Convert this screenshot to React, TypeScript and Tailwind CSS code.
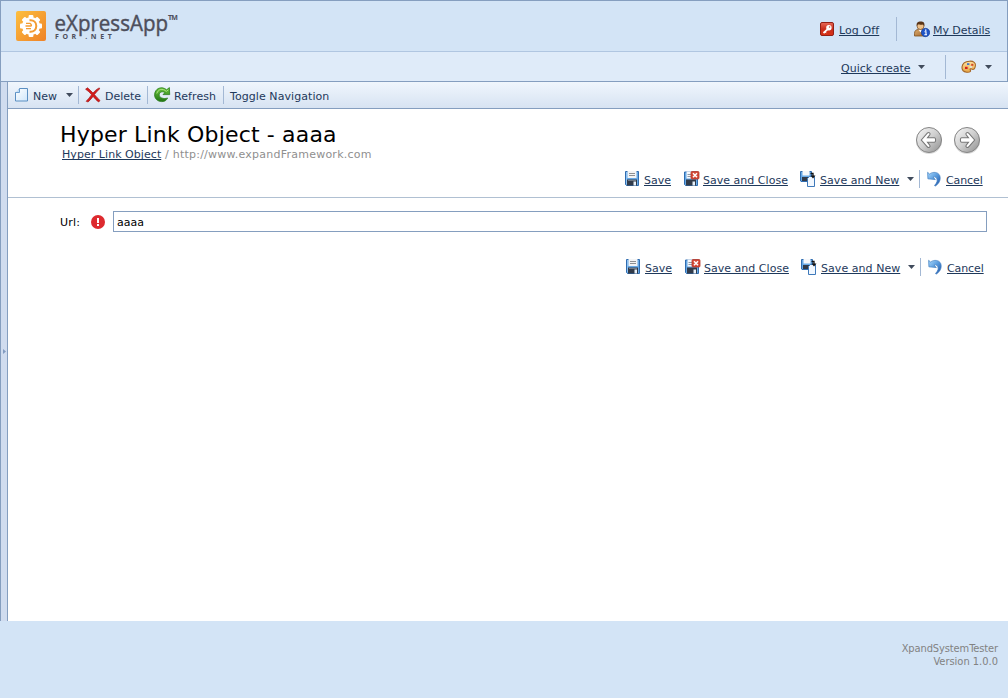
import React from 'react';

type IconProps = { className?: string };

const LogoIcon = () => (
  <svg width="30" height="30" viewBox="0 0 30 30" className="block shrink-0">
    <defs>
      <linearGradient id="logoBg" x1="0" y1="0" x2="1" y2="1">
        <stop offset="0" stopColor="#fdbf3f" />
        <stop offset="1" stopColor="#ee8228" />
      </linearGradient>
    </defs>
    <rect width="30" height="30" rx="2" fill="url(#logoBg)" />
    <g fill="#fff" transform="translate(15 15)">
      <circle r="9" />
      {[0, 45, 90, 135, 180, 225, 270, 315].map((a) => (
        <rect key={a} x="-2.4" y="-11" width="4.8" height="5" rx="1" transform={`rotate(${a})`} />
      ))}
    </g>
    <path d="M13.500 9.300c4.500-.6 6.800 2.200 6.800 5.700s-2.300 6.300-6.800 5.700" fill="none" stroke="#f39c32" strokeWidth="2" />
    <path d="M9.500 15h6M10 12.300h4c1 .500 1.500 1.500 1.500 2.700M10 17.700h5" fill="none" stroke="#f39c32" strokeWidth="1.300" />
  </svg>
);

const KeyIcon = () => (
  <svg width="15" height="15" viewBox="0 0 15 15" className="block shrink-0">
    <defs>
      <linearGradient id="keyBg" x1="0" y1="0" x2="0" y2="1">
        <stop offset="0" stopColor="#e86a58" />
        <stop offset=".5" stopColor="#c92e1d" />
        <stop offset="1" stopColor="#d93115" />
      </linearGradient>
    </defs>
    <rect x=".5" y=".5" width="13" height="13" rx="1.500" fill="url(#keyBg)" stroke="#922016" />
    <path d="M7.500 7.400 3.500 11" stroke="#fff" strokeWidth="1.800" />
    <path d="m5 9.800 1.300 1.300" stroke="#fff" />
    <circle cx="8.900" cy="5.800" r="2.700" fill="#fff" />
    <circle cx="9.600" cy="5" r=".8" fill="#c8493a" />
  </svg>
);

const UserIcon = () => (
  <svg width="16" height="17" viewBox="0 0 16 17" className="block shrink-0">
    <defs>
      <linearGradient id="userBody" x1="0" y1="0" x2="1" y2="1">
        <stop offset="0" stopColor="#dfae70" />
        <stop offset="1" stopColor="#9c632b" />
      </linearGradient>
    </defs>
    <path d="M.5 15v-2.500c0-2.600 1.500-4 4-4h4c2 0 3.500 1.500 3.500 4V15z" fill="url(#userBody)" stroke="#80501f" strokeWidth=".8" />
    <path d="m4.500 8.500 2 3 2-3z" fill="#fff" />
    <circle cx="6.500" cy="5" r="3.500" fill="#efc28b" stroke="#6f4520" strokeWidth=".7" />
    <path d="M2.700 5C2.200 1.700 4 .6 6.600.6 9.500.6 11 2 10.300 5L9 3.600C7 4 5 3.600 4 3.300z" fill="#5a3518" />
    <circle cx="11.500" cy="11.500" r="4.200" fill="#1f55c8" stroke="#0f378f" strokeWidth=".6" />
    <path d="M10.500 10.800h1.500v3M10.300 13.800h2.700" fill="none" stroke="#fff" strokeWidth="1.100" />
    <rect x="11" y="8.500" width="1.400" height="1.300" fill="#fff" />
  </svg>
);

const PaletteIcon = () => (
  <svg width="16" height="14" viewBox="0 0 16 14" className="block shrink-0">
    <defs>
      <linearGradient id="pal" x1="0" y1="0" x2="0" y2="1">
        <stop offset="0" stopColor="#ffe3a2" />
        <stop offset="1" stopColor="#e6a444" />
      </linearGradient>
    </defs>
    <path d="M8.500 1.200C12.500.9 15 3 14.400 5.800 14 9.200 12.500 9.900 10.500 9 8.800 8.600 8.900 9.400 9.400 10.200c.8 1.400-1 2.400-3.800 2C2.500 11.800.8 9.600 1 7 1.300 3.800 4.300 1.500 8.500 1.200z" fill="url(#pal)" stroke="#a66625" strokeWidth="1.100" />
    <rect x="6" y="3.200" width="2.400" height="1.800" fill="#3f74d0" />
    <rect x="10.200" y="3.800" width="2.200" height="2" fill="#d24a2c" />
    <rect x="4" y="6.800" width="2.600" height="2.200" fill="#d51f1a" />
    <rect x="8.500" y="6.300" width="2.500" height="1.400" fill="#dcecf8" />
  </svg>
);

const NewIcon = () => (
  <svg width="14" height="16" viewBox="0 0 14 16" className="block shrink-0">
    <defs>
      <linearGradient id="newDoc" x1="0" y1="0" x2="1" y2="1">
        <stop offset="0" stopColor="#fff" />
        <stop offset="1" stopColor="#cfe6fb" />
      </linearGradient>
    </defs>
    <path d="M4.500 1.500h8v12.500H.500v-8.500h2z" fill="url(#newDoc)" stroke="#5b8fc2" />
    <path d="M4.500 1.500V5.500H.500" fill="#bfdcf5" stroke="#6a9ccd" />
  </svg>
);

const DeleteIcon = () => (
  <svg width="16" height="16" viewBox="0 0 16 16" className="block shrink-0">
    <path d="M.600 2.200 2.500.8C4.600 2.500 6.300 4.300 8 6.100 9.800 3.900 11.800 2 14.300.9l.4 1C12.500 3.500 10.900 5.500 9.400 7.600c1.900 2.200 3.700 4.200 5.600 5.900l-1.300 1.500C11.600 13.500 9.800 11.500 8.100 9.400c-1.600 2-3.200 4-5 5.600l-1.900-.7C3.200 12.300 4.900 10 6.600 7.700 4.900 5.700 3 3.800.600 2.200z" fill="#d51b1b" stroke="#a51a1a" strokeWidth=".7" />
  </svg>
);

const RefreshIcon = () => (
  <svg width="17" height="16" viewBox="0 0 17 16" className="block shrink-0">
    <defs>
      <linearGradient id="refr" x1="0" y1="0" x2="0" y2="1">
        <stop offset="0" stopColor="#6cc63b" />
        <stop offset="1" stopColor="#217414" />
      </linearGradient>
    </defs>
    <path d="M12.600 2.800 15.400.600l.3 7H9l2-2C8.800 4 5.400 4.800 5.200 7.800c-.1 3 4.400 4.600 8.400 3.200-1.200 2.600-3.300 3.700-5.900 3.600C3.300 14.400.600 11.600.600 7.800.700 1.500 7.600-1.500 12.600 2.800z" fill="url(#refr)" stroke="#287c1c" strokeWidth=".8" />
    <path d="M2.800 6.500C4.300 2.100 8.400.900 12.300 4.400l2-1.500" fill="none" stroke="#b4e68a" strokeWidth=".9" />
  </svg>
);

const SaveIcon = () => (
  <svg width="15" height="16" viewBox="0 0 15 16" className="block shrink-0">
    <path d="M.5.500h13v14H1.500l-1-1z" fill="#67a9e6" stroke="#2f6cb0" />
    <rect x="2.500" y="0" width="9" height="7" fill="#f3f4f5" />
    <path d="M4 2.500h6M4 4.500h6" stroke="#8d8f92" />
    <rect x="2" y="8.500" width="10" height="6" fill="#323b49" />
    <rect x="3" y="9" width="8" height="1" fill="#707984" />
    <rect x="8.500" y="10.500" width="2.500" height="4" fill="#e8f1fa" />
    <path d="M1.500 1v12" stroke="#8fc3f3" />
  </svg>
);

const SaveCloseIcon = () => (
  <svg width="16" height="16" viewBox="0 0 16 16" className="block shrink-0">
    <path d="M.5 1h13v13.500h-12l-1-1z" fill="#67a9e6" stroke="#2f6cb0" />
    <rect x="2.500" y=".500" width="6" height="7" fill="#f6f8fb" />
    <path d="M3.500 3.500h4M3.500 5.500h4" stroke="#8c99a8" />
    <rect x="2" y="8.500" width="10" height="6" fill="#323b49" />
    <rect x="8.500" y="10.500" width="2.500" height="4" fill="#e8f1fa" />
    <rect x="7" y=".500" width="8" height="7.500" rx="1" fill="#d34836" stroke="#b5382c" strokeWidth=".8" />
    <path d="m9 2.200 4 4m0-4-4 4" stroke="#fff" strokeWidth="1.500" />
  </svg>
);

const SaveNewIcon = () => (
  <svg width="16" height="16" viewBox="0 0 16 16" className="block shrink-0">
    <path d="M.5.500h11v10H1l-.500-.500z" fill="#67a9e6" stroke="#2f6cb0" />
    <rect x="2.500" y="0" width="7" height="4.500" fill="#f6f8fb" />
    <rect x="2" y="6" width="7" height="4" fill="#323b49" />
    <path d="M9.500 5.500h5v10H7.500V7.500z" fill="#f2f8ff" stroke="#3e79ba" />
    <path d="M10.500 2.500H13v3" fill="none" stroke="#111" strokeWidth="1.300" />
    <path d="M10.500 4.500h5L13 7.500z" fill="#111" />
  </svg>
);

const CancelIcon = () => (
  <svg width="15" height="16" viewBox="0 0 15 16" className="block shrink-0">
    <defs>
      <linearGradient id="undo" x1="0" y1="0" x2="1" y2="1">
        <stop offset="0" stopColor="#a9d8fb" />
        <stop offset=".5" stopColor="#5598dc" />
        <stop offset="1" stopColor="#1d4fa0" />
      </linearGradient>
    </defs>
    <path d="m.600 1.300 1.900 1.700C6 .500 11 .800 12.700 4.500c1.400 4-.4 8-4.300 10.500l-.9-.4c2.600-3 3.300-5.300 2.200-7C8.900 5.900 7.500 5.500 6 6l2.300 2.600L.900 7.800z" fill="url(#undo)" stroke="#3f7cc0" strokeWidth=".7" />
  </svg>
);

const NavButton = ({ flip = false }: { flip?: boolean }) => (
  <svg width="28" height="29" viewBox="0 0 28 29" className="block shrink-0">
    <defs>
      <linearGradient id="navG" x1="0" y1="0" x2="1" y2="1">
        <stop offset="0" stopColor="#f8f8f8" />
        <stop offset=".5" stopColor="#cfcfcf" />
        <stop offset="1" stopColor="#8d8d8d" />
      </linearGradient>
    </defs>
    <circle cx="14" cy="15" r="13" fill="#ddd" />
    <circle cx="14" cy="14" r="12.500" fill="url(#navG)" stroke="#858585" />
    <path
      d="m6.300 14 6.200-7c1.400-1.200 3.300.300 2.300 1.800L12.500 11.800h7c1.500.200 1.500 4.200 0 4.400h-7l2.300 3c1 1.500-.9 3-2.300 1.800z"
      fill="#fff"
      stroke="#777"
      strokeWidth="1.100"
      transform={flip ? 'translate(28 0) scale(-1 1)' : undefined}
    />
  </svg>
);

const ErrorIcon = () => (
  <svg width="14" height="14" viewBox="0 0 14 14" className="block shrink-0">
    <circle cx="7" cy="7" r="7" fill="#dd2a2f" />
    <path d="M6 3h2v5H6zM6 9h2v2H6z" fill="#fff" />
  </svg>
);

const Arrow = ({ className = '' }: IconProps) => (
  <svg width="7" height="4" viewBox="0 0 7 4" className={`block shrink-0 ${className}`}>
    <path d="M0 0h7L3.500 4z" fill="#404b5c" />
  </svg>
);

const Label = ({ children, className = '' }: { children: React.ReactNode; className?: string }) => (
  <span className={`block shrink-0 whitespace-nowrap text-[11px] leading-[13px] text-[#1e395b] ${className}`}>{children}</span>
);

const Link = ({ children, className = '' }: { children: React.ReactNode; className?: string }) => (
  <a
    className={`block shrink-0 whitespace-nowrap text-[11px] leading-[13px] text-[#1e395b] underline decoration-1 underline-offset-[1px] [text-decoration-skip-ink:none] ${className}`}
  >
    {children}
  </a>
);

const Actions = () => (
  <div className="flex h-[18px] items-center">
    <SaveIcon />
    <Link className="ml-1 mt-0.5 w-10">Save</Link>
    <SaveCloseIcon />
    <Link className="ml-[3px] mt-0.5 w-[97px] tracking-[0.02px]">Save and Close</Link>
    <SaveNewIcon />
    <Link className="ml-1 mt-0.5 w-[87px] tracking-[0.05px]">Save and New</Link>
    <Arrow />
    <div className="ml-[5px] h-[18px] w-px bg-[#a3b8d4]" />
    <div className="ml-[7px]">
      <CancelIcon />
    </div>
    <Link className="ml-1 mt-0.5 w-[37px] tracking-[-0.1px]">Cancel</Link>
  </div>
);

export default function App() {
  return (
    <div className="flex h-[698px] w-[1008px] flex-col overflow-hidden bg-[#d3e4f6] font-['DejaVu_Sans',sans-serif]">
      <header className="h-[82px] border border-[#859ebf]">
        <div className="flex h-[51px] justify-between border-b border-[#b0c6e1] bg-[#d3e4f6]">
          <div className="flex pl-[15px] pt-2.5">
            <LogoIcon />
            <div className="ml-[9px] flex flex-col text-[#4d4e5b]">
              <div className="flex h-[22px] items-start">
                <svg width="113" height="30" viewBox="0 0 113 30" className="block shrink-0 overflow-visible">
                  <text x="-.5" y="20" fontSize="22.500" fontFamily="Open Sans" fontWeight="500" fill="#4d4e5b" stroke="#4d4e5b" strokeWidth=".45" textLength="113.500" lengthAdjust="spacingAndGlyphs">eXpressApp</text>
                </svg>
                <span className="mt-[3px] font-['Open_Sans',sans-serif] text-[7px] font-bold leading-[8px] tracking-[-0.8px]">TM</span>
              </div>
              <span className="whitespace-nowrap font-['Open_Sans',sans-serif] text-[7px] font-bold leading-[7px] tracking-[3.6px]">FOR .NET</span>
            </div>
          </div>
          <div className="flex pr-4 pt-4">
            <div className="mt-[5px]"><KeyIcon /></div>
            <Link className="ml-1 mt-[7px] w-[57px] tracking-[0.1px]">Log Off</Link>
            <div className="h-6 w-px bg-[#a3b8d4]" />
            <div className="ml-[17px] mt-1"><UserIcon /></div>
            <Link className="ml-[3px] mt-[7px] w-[58px] tracking-[-0.05px]">My Details</Link>
          </div>
        </div>
        <div className="flex h-[29px] justify-end bg-[#dfebf9] pr-[15px] pt-[3px]">
          <Link className="mt-[7px] w-[77px]">Quick create</Link>
          <Arrow className="mt-2.5" />
          <div className="ml-5 h-6 w-px bg-[#a3b8d4]" />
          <div className="ml-[15px] mt-[5px]"><PaletteIcon /></div>
          <Arrow className="ml-2 mt-2.5" />
        </div>
      </header>

      <div className="flex h-[539px]">
        <div className="flex w-2 shrink-0 items-center border-x border-[#859ebf] bg-[#d0dcef] pl-0.5">
          <svg width="4" height="5" viewBox="0 0 4 5" className="block">
            <path d="M0 0v5l3-2.500z" fill="#829bc0" />
          </svg>
        </div>
        <main className="flex-1 bg-white">
          <div className="flex h-[27px] items-center border-b border-[#859ebf] bg-gradient-to-b from-[#f0f6fd] to-[#d7e3f2] pl-[7px]">
            <NewIcon />
            <Label className="ml-1 mt-0.5 w-[33px]">New</Label>
            <Arrow />
            <div className="ml-[5px] h-[18px] w-px bg-[#a3b8d4]" />
            <div className="ml-1.5"><DeleteIcon /></div>
            <Label className="ml-1 mt-0.5 w-[42px]">Delete</Label>
            <div className="h-[18px] w-px bg-[#a3b8d4]" />
            <div className="ml-1.5"><RefreshIcon /></div>
            <Label className="ml-[3px] mt-0.5 w-[49px] tracking-[0.08px]">Refresh</Label>
            <div className="h-[18px] w-px bg-[#a3b8d4]" />
            <Label className="ml-1.5 mt-0.5 tracking-[0.07px]">Toggle Navigation</Label>
          </div>

          <div className="h-[89px] border-b border-[#b0c0d2]">
            <div className="flex h-[61px] justify-between pl-[52px] pr-[27px]">
              <div className="pt-3">
                <h1 className="whitespace-nowrap text-[22px] leading-[27px] tracking-[0.17px] text-black">Hyper Link Object - aaaa</h1>
                <div className="flex pl-0.5">
                  <Link className="tracking-[0.05px]">Hyper Link Object</Link>
                  <span className="whitespace-pre text-[11px] leading-[13px] tracking-[0.24px] text-[#8f8f8f]"> / http://www.expandFramework.com</span>
                </div>
              </div>
              <div className="flex gap-2.5 pt-[17px]">
                <NavButton />
                <NavButton flip />
              </div>
            </div>
            <div className="flex justify-end pr-[25px]">
              <Actions />
            </div>
          </div>

          <div className="flex pl-[52px] pt-[13px]">
            <span className="mt-[5px] w-[31px] text-[11px] leading-[13px] tracking-[0.2px] text-black">Url:</span>
            <div className="mt-1"><ErrorIcon /></div>
            <input
              className="ml-2 h-[21px] w-[874px] border border-[#859ebf] bg-white px-[3px] pt-0.5 text-[11px] text-black outline-none"
              defaultValue="aaaa"
            />
          </div>
          <div className="flex justify-end pr-6 pt-[26px]">
            <Actions />
          </div>
        </main>
      </div>

      <footer className="flex-1 bg-[#d3e4f6] pr-2.5 pt-[21px] text-right font-['DejaVu_Sans_Condensed','DejaVu_Sans',sans-serif] text-[11px] leading-[13px] text-[#828282]">
        <div className="tracking-[-0.1px]">XpandSystemTester</div>
        <div>Version 1.0.0</div>
      </footer>
    </div>
  );
}
